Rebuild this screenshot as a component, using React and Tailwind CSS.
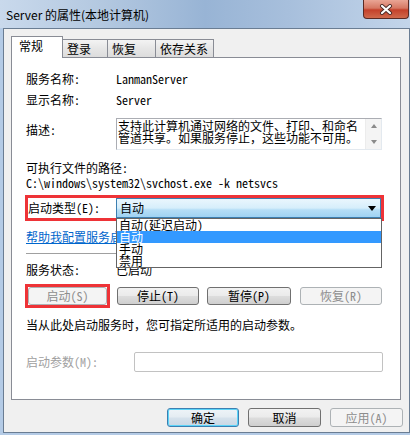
import React from "react";

function Btn({ children, w, disabled, def }) {
  const base = "h-[18px] flex items-center justify-center rounded-[3px] border text-[12px] leading-[12px] shrink-0";
  let look = "border-[#707070] bg-[linear-gradient(#f2f2f2,#ebebeb_48%,#dddddd_52%,#cfcfcf)] text-black";
  if (disabled) look = "border-[#adb2b5] bg-[#f4f4f4] text-[#8d8d8d]";
  if (def) look = "border-[#3c7fb1] bg-[linear-gradient(#eef4f8,#e4ecf2_48%,#d6e2ec_52%,#c9d7e4)] shadow-[inset_0_0_0_1px_#5cd4f8] text-black";
  return <div className={`${base} ${w} ${look}`}>{children}</div>;
}

function Tab({ children, active, w }) {
  if (active)
    return (
      <div className={`${w} h-[22px] -mb-px relative z-10 bg-white border border-b-0 border-[#898c95] pl-[7px] pt-[3px] text-[12px] leading-[12px]`}>
        {children}
      </div>
    );
  return (
    <div className={`${w} h-[18px] border-t border-r border-[#898c95] bg-[linear-gradient(#f3f3f3,#e6e6e6_50%,#dcdcdc)] pl-[4px] pt-[3px] text-[12px] leading-[12px]`}>
      {children}
    </div>
  );
}

export default function App() {
  return (
    <div className="w-[410px] h-[435px] overflow-hidden relative bg-[#b4cbe6] font-[family-name:'Noto_Sans_Mono_CJK_SC','Noto_Sans_CJK_SC',sans-serif] text-black">
      {/* title bar */}
      <div className="h-[28px] flex items-center pl-[6px] pt-[1px] bg-[linear-gradient(90deg,#c9d9ec,#b3c8e0_25%,#98b4d5_50%,#a7bfdc_70%,#c3d5ea)]">
        <span className="font-[family-name:'Noto_Sans_CJK_SC',sans-serif] text-[12px] leading-[14px] text-black">
          Server 的属性(本地计算机)
        </span>
      </div>
      {/* close button */}
      <div className="absolute top-0 left-[363px] w-[46px] h-[19px] rounded-b-[4px] border border-t-0 border-[#5a2a24] bg-[linear-gradient(#e9a595,#d67863_45%,#c4412b_55%,#d0694c)] flex items-center justify-center">
        <svg width="14" height="11" viewBox="0 0 14 11">
          <path d="M3 2 L11 9 M11 2 L3 9" stroke="#4a2a26" strokeWidth="4" strokeLinecap="round" />
          <path d="M3 2 L11 9 M11 2 L3 9" stroke="#ffffff" strokeWidth="2.2" strokeLinecap="round" />
        </svg>
      </div>

      <div className="flex">
        <div className="w-[3px]" />
        {/* body */}
        <div className="w-[407px] h-[405px] border-l border-t border-r border-b border-[#6a7d93] bg-[#f0f0f0] flex flex-col">
          {/* tabs */}
          <div className="flex items-end h-[21px] mt-[7px] ml-[7px]">
            <Tab active w="w-[52px]">常规</Tab>
            <Tab w="w-[45px]">登录</Tab>
            <Tab w="w-[48px]">恢复</Tab>
            <Tab w="w-[58px]">依存关系</Tab>
          </div>
          {/* panel */}
          <div className="ml-[7px] w-[390px] h-[343px] border border-[#898c95] bg-white flex flex-col pl-[14px] text-[12px] leading-[12px]">
            <div className="flex items-center h-[20px] mt-[11px]">
              <div className="w-[90px]">服务名称:</div>
              <div>LanmanServer</div>
            </div>
            <div className="flex items-center h-[20px] mt-px">
              <div className="w-[90px]">显示名称:</div>
              <div>Server</div>
            </div>
            <div className="flex items-start mt-[8px]">
              <div className="w-[90px] pt-[6px]">描述:</div>
              <div className="w-[266px] h-[32px] border border-[#abadb3] border-r-[#e3e9ef] border-b-[#e3e9ef] bg-white flex">
                <div className="flex-1 pl-px pt-px text-[12px] leading-[12px]">
                  <div>支持此计算机通过网络的文件、打印、和命名</div>
                  <div>管道共享。如果服务停止，这些功能不可用。</div>
                </div>
                <div className="w-[16px] bg-[#f4f4f4] border-l border-[#ececec] flex flex-col items-center justify-between py-[5px]">
                  <svg width="6" height="4" viewBox="0 0 6 4"><path d="M0 4 L3 0 L6 4 Z" fill="#8a8a8a" /></svg>
                  <svg width="6" height="4" viewBox="0 0 6 4"><path d="M0 0 L6 0 L3 4 Z" fill="#8a8a8a" /></svg>
                </div>
              </div>
            </div>
            <div className="mt-[12px]">可执行文件的路径:</div>
            <div className="mt-[3px]">C:\windows\system32\svchost.exe -k netsvcs</div>

            {/* start type, red box */}
            <div className="mt-[6px] -ml-px w-[359px] h-[26px] border-[3px] border-[#ee3337] flex items-center relative">
              <div className="w-[88px]">启动类型(E):</div>
              <div className="w-[265px] h-[20px] border border-[#3c7fb1] bg-[linear-gradient(#eaf6fd,#d6eefb_50%,#b6def6_60%,#9fd2f2)] flex items-center justify-between pl-[3px] pr-[4px]">
                <span>自动</span>
                <svg width="8" height="5" viewBox="0 0 8 5"><path d="M0 0 L8 0 L4 5 Z" fill="#000" /></svg>
              </div>
              {/* dropdown list */}
              <div className="absolute left-[88px] top-[20px] w-[266px] h-[50px] z-20 bg-white border border-[#646464] flex flex-col">
                <div className="h-[12px] pl-[2px] leading-[12px]">自动(延迟启动)</div>
                <div className="h-[12px] pl-[2px] leading-[12px] bg-[#3399ff] text-white">自动</div>
                <div className="h-[12px] pl-[2px] leading-[12px]">手动</div>
                <div className="h-[12px] pl-[2px] leading-[12px]">禁用</div>
              </div>
            </div>

            <div className="mt-[10px] text-[#0066cc] underline">帮助我配置服务启动选项。</div>
            <div className="mt-[10px] w-[356px] h-[2px] border-t border-b border-t-[#a0a0a0] border-b-white" />
            <div className="flex items-center mt-[9px] h-[12px]">
              <div className="w-[90px]">服务状态:</div>
              <div>已启动</div>
            </div>

            {/* service buttons */}
            <div className="flex items-center mt-[8px] -ml-px">
              <div className="w-[85px] h-[24px] border-[3px] border-[#ee3337] flex">
                <Btn w="w-[79px]" disabled>启动(S)</Btn>
              </div>
              <div className="ml-[7px]"><Btn w="w-[82px]">停止(T)</Btn></div>
              <div className="ml-[8px]"><Btn w="w-[84px]">暂停(P)</Btn></div>
              <div className="ml-[9px]"><Btn w="w-[82px]" disabled>恢复(R)</Btn></div>
            </div>

            <div className="mt-[11px]">当从此处启动服务时，您可指定所适用的启动参数。</div>

            <div className="flex items-center mt-[21px]">
              <div className="w-[108px] text-[#a0a0a0]">启动参数(M):</div>
              <div className="w-[249px] h-[20px] rounded-[2px] border border-[#c2c2c2] bg-white" />
            </div>
          </div>
          {/* dialog buttons */}
          <div className="flex justify-end mt-[8px] pr-[6px] gap-[9px]">
            <Btn w="w-[72px] h-[19px]" def>确定</Btn>
            <Btn w="w-[73px] h-[19px]">取消</Btn>
            <Btn w="w-[73px] h-[19px]" disabled>应用(A)</Btn>
          </div>
        </div>
      </div>
    </div>
  );
}
